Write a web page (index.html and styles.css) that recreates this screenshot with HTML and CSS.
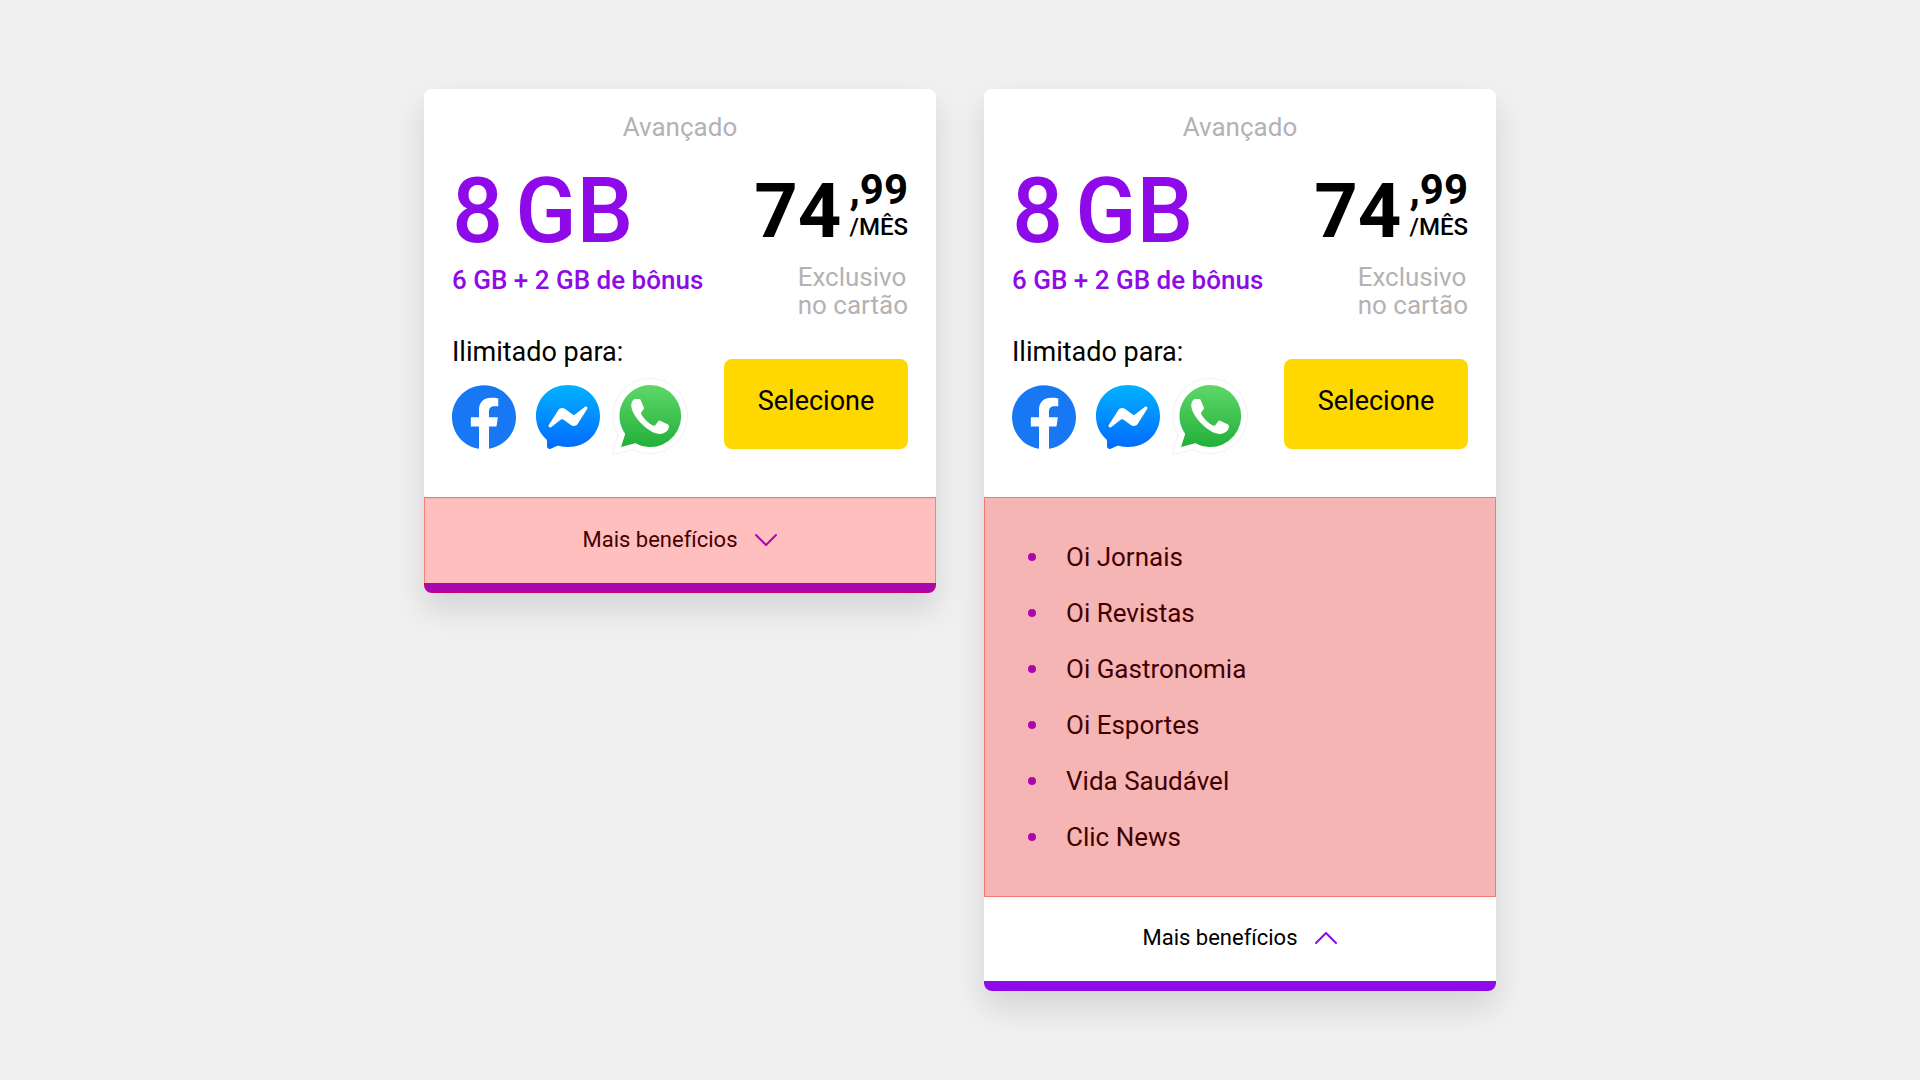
FILE: index.html
```html
<!DOCTYPE html>
<html lang="pt-BR">
<head>
<meta charset="utf-8">
<meta name="viewport" content="width=device-width, initial-scale=1">
<title>Planos</title>
<link rel="stylesheet" href="styles.css">
</head>
<body>
<svg class="sprite" aria-hidden="true">
  <defs>
    <linearGradient id="messenger-fill" x1="0" y1="0" x2="0" y2="1">
      <stop offset="0" stop-color="#00b2ff"/><stop offset="1" stop-color="#006aff"/>
    </linearGradient>
    <linearGradient id="whatsapp-fill" x1="0" y1="0" x2="0" y2="1">
      <stop offset="0" stop-color="#5fd768"/><stop offset="1" stop-color="#22b03a"/>
    </linearGradient>
  </defs>
  <symbol id="facebook" viewBox="0 0 24 24">
    <path fill="#1877f2" d="M24 12.073c0-6.627-5.373-12-12-12s-12 5.373-12 12c0 5.99 4.388 10.954 10.125 11.854v-8.385H7.078v-3.47h3.047V9.43c0-3.007 1.792-4.669 4.533-4.669 1.312 0 2.686.235 2.686.235v2.953H15.83c-1.491 0-1.956.925-1.956 1.874v2.25h3.328l-.532 3.47h-2.796v8.385C19.612 23.027 24 18.062 24 12.073z"/>
  </symbol>
  <symbol id="messenger" viewBox="0 0 64 64">
    <path fill="url(#messenger-fill)" d="M32 0C14 0 0 13.200 0 31c0 9.300 3.800 17.400 10 23 .5.500.8 1.100.9 1.800l.2 5.700c.1 1.800 1.900 3 3.600 2.200l6.300-2.800c.5-.2 1.100-.3 1.700-.1 2.900.8 6 1.200 9.300 1.200 18 0 32-13.200 32-31S50 0 32 0z"/>
    <path fill="#fff" d="M12.800 40.100l9.400-14.900c1.500-2.400 4.700-3 7-1.300l7.500 5.600c.7.500 1.600.5 2.300 0l10-7.700c1.400-1 3.100.6 2.200 2.100l-9.400 14.900c-1.500 2.400-4.700 3-7 1.300l-7.500-5.600c-.7-.5-1.600-.5-2.300 0l-10 7.700c-1.400 1-3.100-.6-2.200-2.100z"/>
  </symbol>
  <symbol id="whatsapp" viewBox="0 0 64 64" overflow="visible">
    <path class="whatsapp-edge" d="M30-6.500a37.500 37.500 0 1 1-17 71L-7.500 69.500l5.500-19.500A37.500 37.500 0 0 1 30-6.500z"/>
    <path fill="url(#whatsapp-fill)" d="M30 0a31 31 0 1 1-14.700 58.200L1 62l4.200-13A31 31 0 0 1 30 0z"/>
    <path fill="#fff" d="M18.200 14h-2.600c-1 0-2 .5-2.700 1.400C11.500 17 11 19.500 11.400 22c.7 4.700 4.300 11 10.400 17.100 5.700 5.700 12.200 9.600 17.500 9.900 4 .2 8.500-2.400 9.300-5.700.2-1.100.3-2.300.1-3-.2-.6-.8-.9-1.600-1.300l-6.500-3.100c-1.100-.5-1.800-.4-2.500.6l-2.700 3.500c-.6.8-1.300.9-2.300.5-3.800-1.600-9.200-6.500-11.800-11.600-.4-.8-.3-1.400.2-2l2-2.500c.5-.7.6-1.200.2-2.200l-3-7.100c-.4-.9-.9-1.100-2.500-1.100z"/>
  </symbol>
</svg>

<main class="plans">
  <article class="card">
    <div class="card-main">
      <h2 class="card-title">Avançado</h2>
      <div class="card-columns">
        <div class="offer">
          <p class="quota"><span>8</span> <span>GB</span></p>
          <p class="bonus">6 GB + 2 GB de bônus</p>
          <p class="unlimited">Ilimitado para:</p>
          <div class="apps">
            <svg class="app" role="img" aria-label="Facebook"><use href="#facebook"/></svg>
            <svg class="app" role="img" aria-label="Messenger"><use href="#messenger"/></svg>
            <svg class="app" role="img" aria-label="WhatsApp"><use href="#whatsapp"/></svg>
          </div>
        </div>
        <div class="purchase">
          <p class="price">
            <span class="price-whole">74</span>
            <span class="price-side"><span class="price-cents">,99</span><span class="price-period">/MÊS</span></span>
          </p>
          <p class="condition">Exclusivo<br>no cartão</p>
          <button class="select" type="button">Selecione</button>
        </div>
      </div>
    </div>
    <div class="card-footer divided highlight">
      <button class="toggle" type="button" aria-expanded="false">Mais benefícios
        <svg class="chevron" viewBox="0 0 24 14" aria-hidden="true"><path d="M2 2l10 10L22 2"/></svg>
      </button>
    </div>
  </article>

  <article class="card">
    <div class="card-main">
      <h2 class="card-title">Avançado</h2>
      <div class="card-columns">
        <div class="offer">
          <p class="quota"><span>8</span> <span>GB</span></p>
          <p class="bonus">6 GB + 2 GB de bônus</p>
          <p class="unlimited">Ilimitado para:</p>
          <div class="apps">
            <svg class="app" role="img" aria-label="Facebook"><use href="#facebook"/></svg>
            <svg class="app" role="img" aria-label="Messenger"><use href="#messenger"/></svg>
            <svg class="app" role="img" aria-label="WhatsApp"><use href="#whatsapp"/></svg>
          </div>
        </div>
        <div class="purchase">
          <p class="price">
            <span class="price-whole">74</span>
            <span class="price-side"><span class="price-cents">,99</span><span class="price-period">/MÊS</span></span>
          </p>
          <p class="condition">Exclusivo<br>no cartão</p>
          <button class="select" type="button">Selecione</button>
        </div>
      </div>
    </div>
    <div class="benefits highlight">
      <ul class="benefit-list">
        <li>Oi Jornais</li>
        <li>Oi Revistas</li>
        <li>Oi Gastronomia</li>
        <li>Oi Esportes</li>
        <li>Vida Saudável</li>
        <li>Clic News</li>
      </ul>
    </div>
    <div class="card-footer">
      <button class="toggle" type="button" aria-expanded="true">Mais benefícios
        <svg class="chevron" viewBox="0 0 24 14" aria-hidden="true"><path d="M2 12L12 2l10 10"/></svg>
      </button>
    </div>
  </article>
</main>
</body>
</html>
```
FILE: styles.css
```css
:root {
  --brand: #8f0ae8;
  --muted: #b3b3b3;
  --page: #f0f0f0;
}

* { box-sizing: border-box; }

body {
  margin: 0;
  background: var(--page);
  color: #000;
  font: 26px/28px Roboto, "Liberation Sans", sans-serif;
}

h2, p, ul { margin: 0; padding: 0; }

button {
  border: 0;
  color: inherit;
  font: inherit;
  cursor: pointer;
}

.sprite { position: absolute; width: 0; height: 0; }

.plans {
  display: flex;
  justify-content: center;
  align-items: flex-start;
  gap: 48px;
  padding: 89px 24px;
}

.card {
  flex: 0 1 512px;
  border-radius: 8px;
  background: #fff;
  box-shadow: 0 16px 32px rgba(0, 0, 0, .12);
  overflow: hidden;
}

.card-main { padding: 24px 28px 48px; }

.card-title {
  color: var(--muted);
  font-size: 26px;
  font-weight: 400;
  text-align: center;
}

.card-columns {
  display: flex;
  justify-content: space-between;
  margin-top: 24px;
}

.quota {
  display: flex;
  gap: 12px;
  color: var(--brand);
  font-size: 90px;
  font-weight: 500;
  line-height: 94px;
}

.bonus {
  margin-top: 7px;
  color: var(--brand);
  font-weight: 500;
}

.unlimited {
  margin-top: 44px;
  font-size: 27px;
}

.apps {
  display: flex;
  gap: 20px;
  margin-top: 19px;
}

.app {
  width: 64px;
  height: 64px;
  overflow: visible;
}

.whatsapp-edge {
  fill: #fff;
  stroke: #f2f2f2;
  stroke-width: 1;
}

.purchase {
  display: flex;
  flex-direction: column;
  align-items: flex-end;
}

.price {
  display: flex;
  gap: 8px;
}

.price-whole {
  font-size: 76px;
  font-weight: 700;
  line-height: 92px;
}

.price-side {
  display: flex;
  flex-direction: column;
  align-items: flex-end;
  gap: 2px;
  padding-top: 4px;
}

.price-cents {
  font-size: 42px;
  font-weight: 700;
  line-height: 42px;
}

.price-period {
  font-size: 24px;
  font-weight: 500;
}

.condition {
  margin-top: 6px;
  color: var(--muted);
}

.select {
  width: 184px;
  height: 90px;
  margin-top: 40px;
  padding: 0 0 6px;
  border-radius: 8px;
  background: #ffd800;
  font-size: 27px;
}

.highlight { position: relative; }

.highlight::after {
  content: "";
  position: absolute;
  inset: 0;
  border: 1px solid rgba(255, 0, 0, .35);
  background: rgba(255, 0, 0, .25);
  pointer-events: none;
}

.card-footer.highlight::after { border-radius: 0 0 8px 8px; }

.benefits {
  padding: 32px;
  background: #f2f2f2;
}

.benefit-list { list-style: none; }

.benefit-list li {
  display: flex;
  align-items: center;
  gap: 30px;
  min-height: 56px;
  padding-left: 12px;
}

.benefit-list li::before {
  content: "";
  width: 8px;
  height: 8px;
  border-radius: 50%;
  background: var(--brand);
}

.divided { border-top: 2px solid #efefef; }

.divided.highlight::after { top: -2px; }

.toggle {
  display: flex;
  justify-content: center;
  align-items: center;
  gap: 16px;
  width: 100%;
  height: 94px;
  padding: 0 0 2px;
  border-bottom: 10px solid var(--brand);
  background: none;
  font-size: 22px;
}

.chevron {
  width: 24px;
  height: 14px;
  fill: none;
  stroke: var(--brand);
  stroke-width: 2;
  stroke-linecap: round;
  stroke-linejoin: round;
}
```
